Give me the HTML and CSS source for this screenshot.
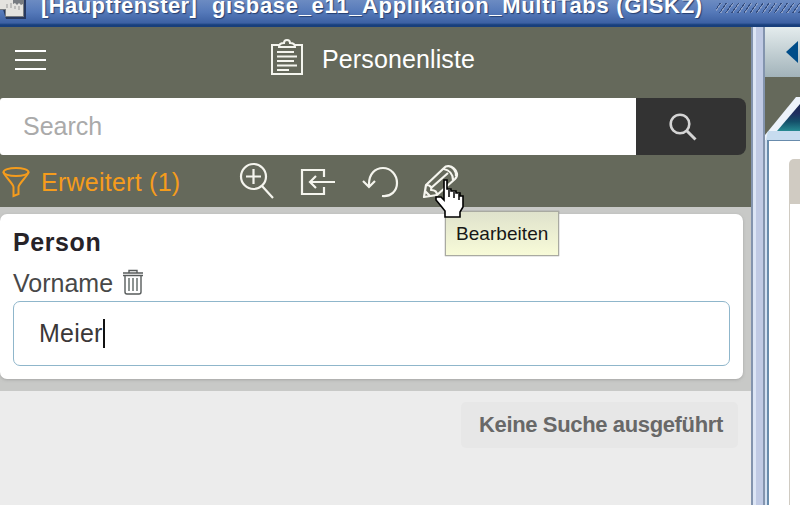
FILE: index.html
```html
<!DOCTYPE html>
<html lang="de">
<head>
<meta charset="utf-8">
<title>Personenliste</title>
<link rel="stylesheet" href="styles.css">
</head>
<body>
<header class="titlebar">
  <svg class="app-icon" width="26" height="19" viewBox="0 0 26 19"><path d="M0 0h26v19H6z" fill="#26385f"/><path d="M0 0h24v17H5V10H0z" fill="#777b80"/><path d="M0 0h13v4l2-1 2 2 2-2 2 2 2-1v12H6V9H0z" fill="#e4e3df"/><path d="M7 8V4M11 8V3M15 9V6M19 10V6" stroke="#999" stroke-width="1"/></svg>
  <span class="title-a">[Hauptfenster]</span>
  <span class="title-b">gisbase_e11_Applikation_MultiTabs (GISKZ)</span>
  <span class="grip"></span>
</header>
<div class="workspace">
  <main class="panel">
    <section class="top">
      <div class="heading">
        <svg class="menu" width="31" height="22" viewBox="0 0 31 22" stroke="#fff" stroke-width="1.8"><path d="M0 2h31M0 11h31M0 20h31"/></svg>
        <svg class="clip" width="34" height="38" viewBox="0 0 34 38" fill="none" stroke="#f4f5ee" stroke-width="2"><path d="M9 7H2v29h30V7h-7M9 9h16c0-3-2-4-5-4 0-4-6-4-6 0-3 0-5 1-5 4zM7 14h17M7 18.500h20M7 23h17M7 27.500h20M7 32h12"/></svg>
        <h1>Personenliste</h1>
      </div>
      <div class="search">
        <div class="search-input">Search</div>
        <div class="search-button"><svg width="28" height="28" viewBox="0 0 28 28" fill="none" stroke="#d4d4d4" stroke-width="2.600"><circle cx="11" cy="11" r="9.300"/><path d="M17.500 17.500l9 9" stroke-width="3"/></svg></div>
      </div>
      <div class="toolbar">
        <svg class="funnel" width="28" height="32" viewBox="0 0 28 32" fill="none" stroke="#f59c1c" stroke-width="2"><ellipse cx="14" cy="6" rx="12.500" ry="4"/><path d="M1.500 6c0 3 10 12 10 15v9l5-2v-7c0-3 10-12 10-15"/></svg>
        <span class="extended">Erweitert (1)</span>
        <svg class="zoom" width="36" height="38" viewBox="0 0 36 38" fill="none" stroke="#f5f5ee" stroke-width="2.200"><circle cx="14.500" cy="14.500" r="12.500"/><path d="M7 14.500h15M14.500 7v15M23 24l11 12"/></svg>
        <svg class="import" width="36" height="28" viewBox="0 0 36 28" fill="none" stroke="#f5f5ee" stroke-width="2.200"><path d="M24 9V2H2v24h22v-7M35 14H10M16 8l-6 6 6 6"/></svg>
        <svg class="undo" width="37" height="32" viewBox="0 0 37 32" fill="none" stroke="#f5f5ee" stroke-width="2.200"><path d="M20 30c9 1 15-5 15-13C35 9 29 2 21 2S7 8 7 18v3M1 15l6 6 6-6"/></svg>
        <svg class="pencil" width="38" height="36" viewBox="0 0 38 36" fill="none" stroke="#f5f5ee" stroke-width="2.200" stroke-linejoin="round"><path d="M2 33l2-12L22 4c5-6 18 4 11 11L15 31zM4 21c5 0 6 3 5 5 4 0 6 2 6 5M22 5c5 1 9 5 9 11M26 2c5 1 8 5 8 10M9 24L26 9M2 33l6-1-5-5z"/></svg>
      </div>
    </section>
    <section class="filter">
      <div class="card">
        <h2>Person</h2>
        <div class="label"><span>Vorname</span><svg width="20" height="26" viewBox="0 0 20 26" fill="none" stroke="#585c5c" stroke-width="1.400"><path d="M0 4h20M0 6.500h20M6 4V1.500h8V4M2 7v16q0 2 2 2h12q2 0 2-2V7"/><path d="M6 9v13M10 9v13M14 9v13" stroke="#8d9492" stroke-width="2"/></svg></div>
        <div class="field"><span>Meier</span><i class="caret"></i></div>
      </div>
    </section>
    <section class="result"><div class="status"><span>Keine Suche ausgeführt</span></div></section>
  </main>
  <div class="divider"></div>
  <aside class="side">
    <div class="side-head"><svg width="12" height="22" viewBox="0 0 12 22"><path d="M12 0v22L0 11z" fill="#004d89"/></svg></div>
    <svg class="tab" width="35" height="63" viewBox="0 0 35 63"><defs><linearGradient id="g" x1="0" y1="0" x2="0" y2="1"><stop offset="0" stop-color="#172650"/><stop offset=".35" stop-color="#202f60"/><stop offset=".65" stop-color="#14506a"/><stop offset="1" stop-color="#268a92"/></linearGradient></defs><path d="M0 0h35v63H0z" fill="#65695b"/><path d="M0 58L31 20h4v43H0z" fill="#edf3fb"/><path d="M12 54L35 27v27z" fill="url(#g)"/><path d="M3 54h32v9H1z" fill="#c7dcef"/></svg>
    <div class="side-content"><div class="sheet"><div class="sheet-head"></div><div class="sheet-body"></div></div></div>
  </aside>
</div>
<div class="tooltip"><span>Bearbeiten</span></div>
<svg class="cursor" width="30" height="40" viewBox="0 0 30 40"><path d="M9 1h3v9h4v2h5v2h4v3h3v11l-3 5v5H10v-6l-4-5-5-6v-3h5l3 3V1z" fill="#fff" stroke="#000" stroke-width="1.600"/><path d="M14 11v7M19 13v6M24 15v6" stroke="#000" stroke-width="1.500"/></svg>
</body>
</html>
```
FILE: styles.css
```css
* { box-sizing: border-box; }
body { margin: 0; width: 800px; height: 505px; overflow: hidden; position: relative; font-family: "Liberation Sans", Arial, sans-serif; background: #ececec; }
svg { display: block; flex: none; }
span, h1 { white-space: nowrap; }
.titlebar { height: 27px; display: flex; background: linear-gradient(#6c8bc2, #5579b9 45%, #3d61a3 85%, #183f7c 92%); color: #fff; font-weight: bold; font-size: 22px; line-height: 24px; text-shadow: 1px 1px 1px #253f70; overflow: hidden; }
.title-a, .title-b { margin-top: -6px; height: 30px; }
.title-a { margin-left: 15px; width: 171px; letter-spacing: .43px; }
.title-b { width: 504px; letter-spacing: .68px; }
.grip { height: 10px; margin-top: 3px; flex: 1; background: repeating-linear-gradient(125deg, transparent 0 3px, #334d80 3px 4px, #899dc5 4px 5px); }
.workspace { display: flex; height: 478px; }
.panel { width: 751px; display: flex; flex-direction: column; }
.top { height: 180px; background: #65695b; }
.heading { height: 71px; display: flex; align-items: flex-start; }
.menu { margin: 22px 0 0 15px; }
.clip { margin: 11px 0 0 224px; }
h1 { margin: 18px 0 0 18px; color: #fff; font-size: 25px; line-height: 28px; font-weight: normal; letter-spacing: .12px; }
.search { height: 57px; display: flex; width: 746px; border-radius: 3px 8px 8px 3px; overflow: hidden; }
.search-input { width: 636px; background: #fff; color: #aaa; font-size: 25px; line-height: 57px; padding-left: 23px; }
.search-button { flex: 1; background: #333; padding: 15px 0 0 33px; }
.toolbar { height: 52px; display: flex; align-items: flex-start; }
.funnel { margin: 11px 0 0 2px; }
.extended { width: 139px; margin: 13px 0 0 11px; color: #f59c1c; font-size: 25px; line-height: 28px; letter-spacing: .25px; }
.zoom { margin: 7px 0 0 59px; }
.import { margin: 13px 0 0 25px; }
.undo { margin: 11px 0 0 26px; }
.pencil { margin: 9px 0 0 23px; }
.filter { height: 184px; background: #c8c9c7; padding-top: 7px; }
.card { width: 743px; height: 165px; background: #fff; border-radius: 7px; padding: 12px 13px; box-shadow: 0 1px 3px #8888; }
h2 { margin: 0; font-size: 25px; line-height: 32px; color: #272328; letter-spacing: .6px; }
.label { height: 43px; display: flex; color: #484848; font-size: 25px; line-height: 50px; }
.label svg { margin: 11px 0 0 10px; }
.field { height: 65px; border: 1.500px solid #8fb6cb; border-radius: 7px; display: flex; align-items: center; padding-left: 25px; font-size: 25px; color: #3b3838; letter-spacing: .2px; }
.caret { width: 2px; height: 29px; background: #111; }
.result { flex: 1; background: #ececec; display: flex; justify-content: flex-end; align-items: flex-start; padding: 11px 13px; }
.status { width: 277px; height: 46px; background: #e7e7e7; border-radius: 5px; padding-left: 18px; font-weight: bold; font-size: 22px; line-height: 46px; color: #686868; letter-spacing: -.36px; }
.divider { width: 14px; background: linear-gradient(90deg, #8394ae 0 2px, #dce5f5 2px 5px, #c0cae4 5px 12px, #8394ae 12px); }
.side { width: 35px; display: flex; flex-direction: column; }
.side-head { height: 50px; background: linear-gradient(#e4eced, #a2b3ba); padding: 14px 0 0 21px; }
.side-content { flex: 1; border-left: 2px solid #d2e0f1; padding-left: 2px; background: #688bac; }
.sheet { height: 100%; background: #fff; border-top: 1px solid #688bac; padding: 18px 0 0 20px; display: flex; flex-direction: column; }
.sheet-head { height: 45px; background: #d0cbc2; border-radius: 5px 0 0; }
.sheet-body { flex: 1; border-left: 1px solid #d0cbc2; }
.tooltip { position: absolute; left: 445px; top: 211px; width: 114px; height: 45px; background: linear-gradient(#dfe2cc, #f8fbd8); border: 1px solid #a9aaa1; box-shadow: 0 0 1px #777; padding-left: 10px; font-size: 19px; line-height: 43px; color: #171717; letter-spacing: .05px; }
.cursor { position: absolute; left: 435px; top: 179px; }
```
